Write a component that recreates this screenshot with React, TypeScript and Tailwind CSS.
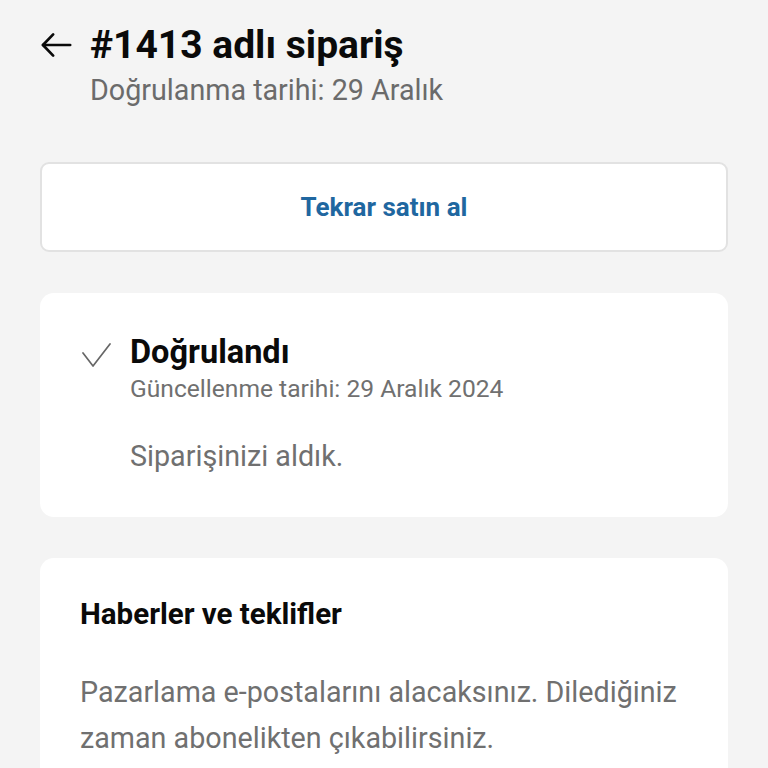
import React from "react";

export default function App() {
  return (
    <div
      className="min-h-[768px] w-full bg-[#f4f4f4] px-[40px] pt-[20px]"
      style={{ fontFamily: "Roboto, 'Noto Sans', sans-serif" }}
    >
      <div className="flex items-start">
        <svg width="34" height="34" viewBox="0 0 24 24" className="mt-[8px] -ml-[1px] shrink-0" fill="none" stroke="#0a0a0a" strokeWidth="1.9" strokeLinecap="round" strokeLinejoin="round">
          <path d="M22 12H2.8" />
          <path d="M10 4.5L2.8 12l7.2 7.5" />
        </svg>
        <div className="ml-[17px]">
          <div className="text-[39px] font-bold leading-[50px] text-[#0a0a0a]">#1413 adlı sipariş</div>
          <div className="mt-[2px] text-[28.7px] leading-[36px] text-[#6b6b6b]">Doğrulanma tarihi: 29 Aralık</div>
        </div>
      </div>

      <div className="mt-[54px] flex h-[90px] items-center justify-center rounded-[9px] border-2 border-[#e2e2e2] bg-white">
        <span className="text-[26px] font-bold text-[#1f67a0]">Tekrar satın al</span>
      </div>

      <div className="mt-[41px] rounded-[14px] bg-white px-[40px] pt-[37px] pb-[43px]">
        <div className="flex items-start">
          <svg width="30" height="26" viewBox="0 0 30 26" className="mt-[12px] ml-[1px] shrink-0" fill="none" stroke="#666" strokeWidth="1.7" strokeLinecap="round" strokeLinejoin="round">
            <path d="M2 11l10 13L29 2" />
          </svg>
          <div className="ml-[19px]">
            <div className="text-[32.5px] font-bold leading-[44px] text-[#0a0a0a]">Doğrulandı</div>
            <div className="text-[24.6px] leading-[30px] text-[#707070]">Güncellenme tarihi: 29 Aralık 2024</div>
            <div className="mt-[34px] text-[28.7px] leading-[36px] text-[#707070]">Siparişinizi aldık.</div>
          </div>
        </div>
      </div>

      <div className="mt-[41px] rounded-[14px] bg-white px-[40px] pt-[36px] pb-[40px]">
        <div className="text-[29.5px] font-bold leading-[40px] text-[#0a0a0a]">Haberler ve teklifler</div>
        <div className="mt-[35px] text-[28.7px] leading-[46px] text-[#707070]">
          Pazarlama e-postalarını alacaksınız. Dilediğiniz zaman abonelikten çıkabilirsiniz.
        </div>
      </div>
    </div>
  );
}
